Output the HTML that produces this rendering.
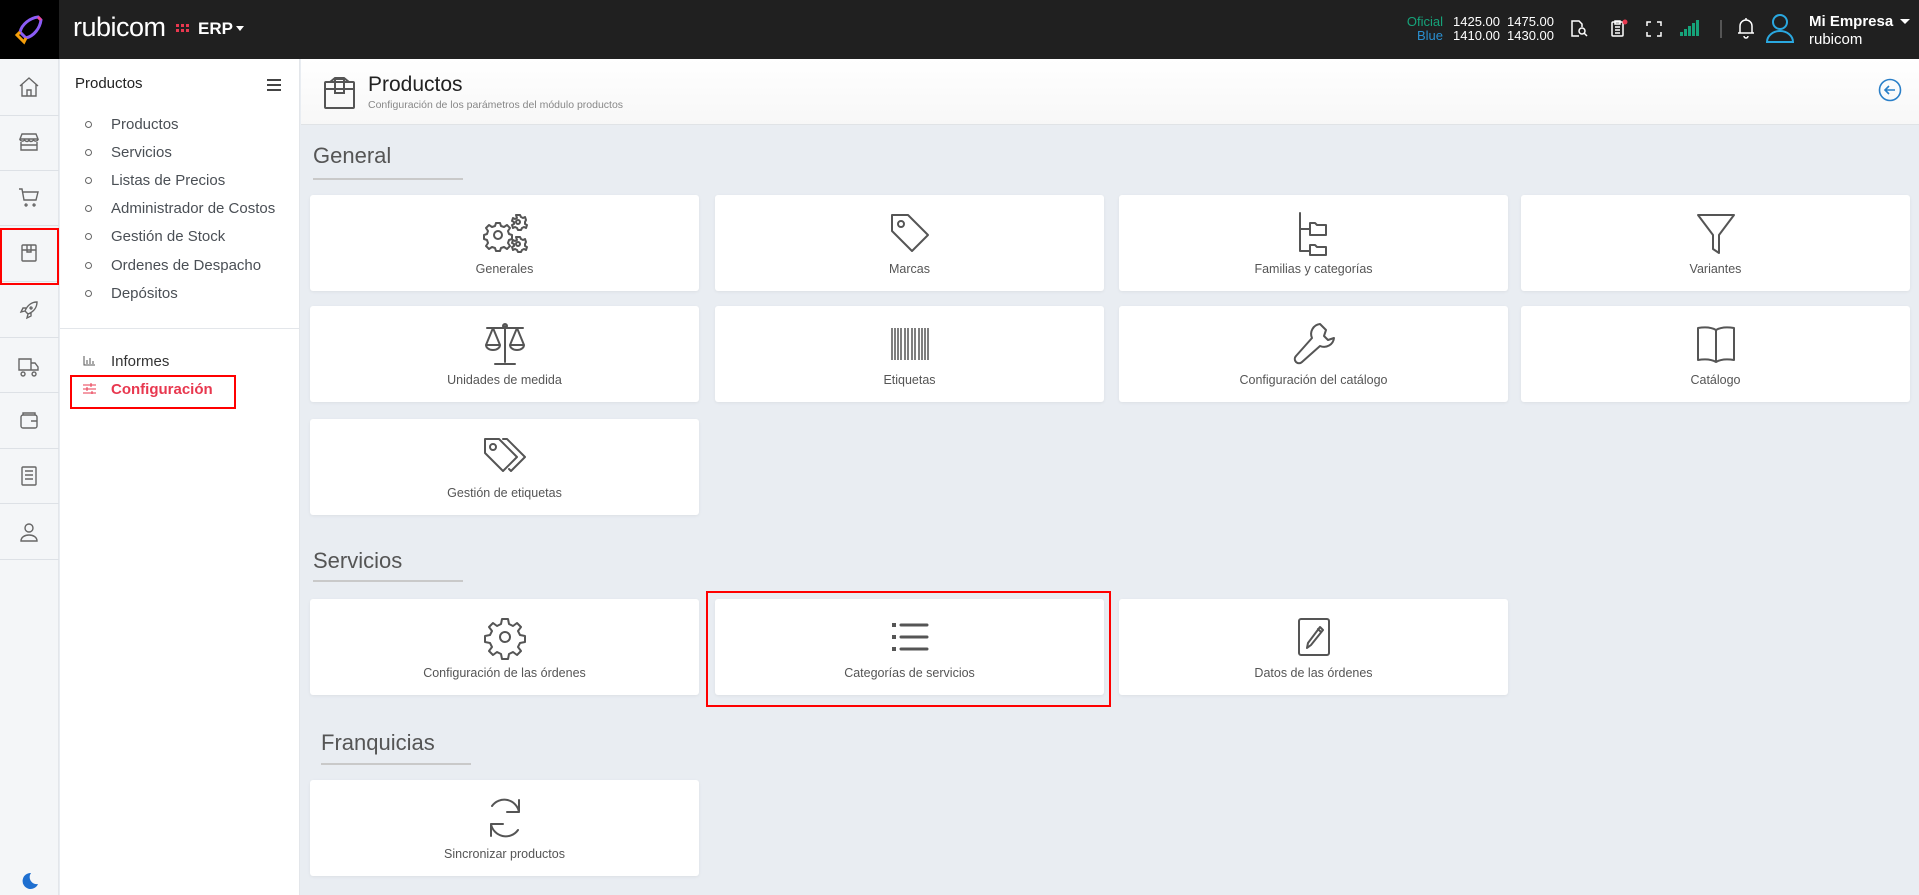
<!DOCTYPE html>
<html><head><meta charset="utf-8">
<style>
*{margin:0;padding:0;box-sizing:border-box}
body{width:1919px;height:895px;overflow:hidden;font-family:"Liberation Sans",sans-serif;background:#e9edf2;position:relative;color:#555}
.abs{position:absolute}
#top{left:0;top:0;width:1919px;height:59px;background:#202020}
#logo{left:0;top:0;width:59px;height:59px;background:#000}
#rail{left:0;top:59px;width:59px;height:836px;background:#f4f6f8;border-right:1px solid #e3e6ea}
.rsep{position:absolute;left:0;width:59px;height:1px;background:#dde1e6}
.ri{position:absolute;left:17px;width:24px;height:24px}
#side{left:60px;top:59px;width:240px;height:836px;background:#fff;border-right:1px solid #e3e6ea}
.li{position:absolute;left:51px;font-size:15px;color:#4a4f55}
.bul{position:absolute;left:25px;width:7px;height:7px;border:1px solid #666;border-radius:50%}
#chead{left:301px;top:59px;width:1618px;height:66px;background:linear-gradient(#fff,#f7f7f7);border-bottom:1px solid #e0e3e6}
.sec{position:absolute;font-size:22px;color:#555}
.ul{position:absolute;height:2px;background:#c9c9c9}
.card{position:absolute;width:389px;height:96px;background:#fff;border-radius:3px;box-shadow:0 1px 3px rgba(0,0,0,.06)}
.card svg{position:absolute;left:50%;top:14px;margin-left:-24px;width:48px;height:48px;fill:none;stroke:#555;stroke-width:2;stroke-linecap:round;stroke-linejoin:round}
.card span{position:absolute;left:0;right:0;top:67px;text-align:center;font-size:12.5px;color:#555}
.red{position:absolute;border:2px solid #f00}
.w{color:#fff}
</style></head><body>
<div id="top" class="abs"></div>
<div id="logo" class="abs"><svg width="59" height="59" viewBox="0 0 59 59"><path d="M38 17 C30 18 22 24 20 32 L26 38 C34 36 40 28 41 20 Z" fill="none" stroke="#8b5cf6" stroke-width="3"/><path d="M20 32 L17 35 L24 42 L26 38" fill="none" stroke="#f59e0b" stroke-width="3"/><path d="M38 17 L41 20" stroke="#ec4899" stroke-width="3"/></svg></div>
<div class="abs w" style="left:73px;top:12px;font-size:27px;font-weight:300;letter-spacing:-0.5px">rubicom</div>
<svg class="abs" style="left:176px;top:24px" width="13" height="9"><g fill="#e8384f"><rect x="0" y="0" width="3" height="3"/><rect x="5" y="0" width="3" height="3"/><rect x="10" y="0" width="3" height="3"/><rect x="0" y="5" width="3" height="3"/><rect x="5" y="5" width="3" height="3"/><rect x="10" y="5" width="3" height="3"/></g></svg>
<div class="abs w" style="left:198px;top:19px;font-size:17px;font-weight:bold">ERP</div>
<div class="abs" style="left:236px;top:26px;border:4px solid transparent;border-top:5px solid #fff"></div>

<div class="abs" style="left:1400px;top:15px;width:43px;text-align:right;font-size:13px;line-height:14px"><div style="color:#16a37a">Oficial</div><div style="color:#2a8fd0">Blue</div></div>
<div class="abs w" style="left:1453px;top:15px;font-size:13px;line-height:14px">1425.00<br>1410.00</div>
<div class="abs w" style="left:1507px;top:15px;font-size:13px;line-height:14px">1475.00<br>1430.00</div>
<svg class="abs" style="left:1569px;top:19px" width="22" height="20" fill="none" stroke="#fff" stroke-width="1.5"><path d="M10 17H3V2h7l3 3v3"/><circle cx="13" cy="12" r="3"/><path d="M15 14l3 3"/></svg>
<svg class="abs" style="left:1609px;top:18px" width="22" height="22" fill="none" stroke="#fff" stroke-width="1.5"><rect x="3" y="4" width="11" height="14" rx="1"/><path d="M6 3h5v3H6zM6 9h5M6 12h5M6 15h5"/><circle cx="16" cy="4" r="2.5" fill="#e8384f" stroke="none"/></svg>
<svg class="abs" style="left:1646px;top:21px" width="16" height="16" fill="none" stroke="#fff" stroke-width="1.5"><path d="M1 5V1h4M11 1h4v4M15 11v4h-4M5 15H1v-4"/></svg>
<svg class="abs" style="left:1680px;top:20px" width="20" height="16" fill="#16a37a"><rect x="0" y="12" width="3" height="4"/><rect x="4" y="9" width="3" height="7"/><rect x="8" y="6" width="3" height="10"/><rect x="12" y="3" width="3" height="13"/><rect x="16" y="0" width="3" height="16"/></svg>
<div class="abs" style="left:1720px;top:20px;width:2px;height:18px;background:#555"></div>
<svg class="abs" style="left:1737px;top:17px" width="18" height="22" fill="none" stroke="#fff" stroke-width="1.5"><path d="M3 16V9a6 6 0 0 1 12 0v7h2H1zM7 19a2 2 0 0 0 4 0M9 1v2"/></svg>
<svg class="abs" style="left:1765px;top:12px" width="30" height="32" fill="none" stroke="#2aa8e0" stroke-width="2"><circle cx="15" cy="10" r="7"/><path d="M2 30a13 11 0 0 1 26 0z"/></svg>
<div class="abs w" style="left:1809px;top:13px;font-size:15px;font-weight:bold">Mi Empresa</div>
<div class="abs" style="left:1900px;top:19px;border:5px solid transparent;border-top:5px solid #fff"></div>
<div class="abs w" style="left:1809px;top:31px;font-size:15px">rubicom</div>

<div id="rail" class="abs">
<div class="rsep" style="top:56px"></div><div class="rsep" style="top:111px"></div><div class="rsep" style="top:166px"></div><div class="rsep" style="top:222px"></div><div class="rsep" style="top:278px"></div><div class="rsep" style="top:333px"></div><div class="rsep" style="top:389px"></div><div class="rsep" style="top:444px"></div><div class="rsep" style="top:500px"></div>
<svg class="ri" style="top:16px" viewBox="0 0 24 24" fill="none" stroke="#666" stroke-width="1.4"><path d="M3 11l9-8 9 8M5 9v12h14V9M10 21v-6h4v6"/></svg>
<svg class="ri" style="top:71px" viewBox="0 0 24 24" fill="none" stroke="#666" stroke-width="1.4"><path d="M3 9l2-5h14l2 5zM3 9c0 2 3 3 4.5 1 1.5 2 3.5 2 4.5 0 1 2 3 2 4.5 0 1.5 2 4.5 1 4.5-1M4 12v8h16v-8M4 15h16"/></svg>
<svg class="ri" style="top:126px" viewBox="0 0 24 24" fill="none" stroke="#666" stroke-width="1.4"><path d="M2 4h3l2 11h12l2-8H6M9 19a1 1 0 1 0 .1 0M17 19a1 1 0 1 0 .1 0"/></svg>
<svg class="ri" style="top:182px" viewBox="0 0 24 24" fill="none" stroke="#666" stroke-width="1.4"><rect x="5" y="4" width="14" height="16" rx="1"/><path d="M5 9h14M10 4v7h4V4"/></svg>
<svg class="ri" style="top:239px" viewBox="0 0 24 24" fill="none" stroke="#666" stroke-width="1.4"><path d="M20 4c-6 0-10 4-12 9l3 3c5-2 9-6 9-12zM8 13l-4 1 2-4h3M11 16l-1 4 4-2v-3M14 9a1 1 0 1 0 .1 0"/></svg>
<svg class="ri" style="top:294px" viewBox="0 0 24 24" fill="none" stroke="#666" stroke-width="1.4"><path d="M2 6h12v11H2zM14 10h4l3 4v3h-7M6 19a2 2 0 1 0 .1 0M17 19a2 2 0 1 0 .1 0"/></svg>
<svg class="ri" style="top:349px" viewBox="0 0 24 24" fill="none" stroke="#666" stroke-width="1.4"><rect x="4" y="7" width="16" height="13" rx="2"/><path d="M6 7V5h12v2M14 13h6"/></svg>
<svg class="ri" style="top:405px" viewBox="0 0 24 24" fill="none" stroke="#666" stroke-width="1.4"><rect x="5" y="3" width="14" height="18" rx="1"/><path d="M8 7h8M8 11h8M8 15h8"/></svg>
<svg class="ri" style="top:461px" viewBox="0 0 24 24" fill="none" stroke="#666" stroke-width="1.4"><circle cx="12" cy="8" r="4"/><path d="M4 21c0-4 4-6 8-6s8 2 8 6z"/></svg>
<svg class="ri" style="top:810px" viewBox="0 0 24 24" fill="#1e6fd0"><path d="M14 4a8 8 0 1 0 7 11A7 7 0 0 1 14 4z"/></svg>
</div>
<div class="red" style="left:0;top:228px;width:59px;height:57px"></div>

<div id="side" class="abs">
<div class="abs" style="left:15px;top:16px;font-size:15px;color:#222">Productos</div>
<div class="abs" style="left:207px;top:20px;width:14px;height:2px;background:#444;box-shadow:0 5px 0 #444,0 10px 0 #444"></div>
<div class="bul" style="top:62px"></div><div class="li" style="top:57px">Productos</div>
<div class="bul" style="top:90px"></div><div class="li" style="top:85px">Servicios</div>
<div class="bul" style="top:118px"></div><div class="li" style="top:113px">Listas de Precios</div>
<div class="bul" style="top:146px"></div><div class="li" style="top:141px">Administrador de Costos</div>
<div class="bul" style="top:174px"></div><div class="li" style="top:169px">Gestión de Stock</div>
<div class="bul" style="top:203px"></div><div class="li" style="top:198px">Ordenes de Despacho</div>
<div class="bul" style="top:231px"></div><div class="li" style="top:226px">Depósitos</div>
<div class="abs" style="left:0;top:269px;width:240px;height:1px;background:#e3e6ea"></div>
<svg class="abs" style="left:23px;top:297px" width="12" height="10" fill="none" stroke="#555"><path d="M1 0v9h11M4 4v4M7 2v6M10 5v3"/></svg>
<div class="li" style="top:294px;color:#333">Informes</div>
<svg class="abs" style="left:23px;top:324px" width="13" height="11" fill="none" stroke="#e8384f"><path d="M0 2h13M0 6h13M0 10h13M8 0v4M4 4v4M9 8v3"/></svg>
<div class="li" style="top:322px;color:#e8384f;font-weight:bold">Configuración</div>
</div>
<div class="red" style="left:70px;top:375px;width:166px;height:34px"></div>

<div id="chead" class="abs">
<svg class="abs" style="left:23px;top:18px" width="32" height="33" fill="none" stroke="#555" stroke-width="2"><rect x="1" y="5" width="29" height="26" rx="1"/><path d="M1 12h29M11 2v14h9V2zM6 5l5-4h9l5 4"/></svg>
<div class="abs" style="left:67px;top:14px;font-size:21px;color:#222">Productos</div>
<div class="abs" style="left:67px;top:40px;font-size:10.5px;color:#888">Configuración de los parámetros del módulo productos</div>
<svg class="abs" style="left:1577px;top:19px" width="24" height="24" fill="none" stroke="#2a7fc8" stroke-width="1.6"><circle cx="12" cy="12" r="10.5"/><path d="M17 12H7M11 8l-4 4 4 4"/></svg>
</div>

<div class="sec" style="left:313px;top:143px">General</div><div class="ul" style="left:313px;top:178px;width:150px"></div>
<div class="sec" style="left:313px;top:548px">Servicios</div><div class="ul" style="left:313px;top:580px;width:150px"></div>
<div class="sec" style="left:321px;top:730px">Franquicias</div><div class="ul" style="left:321px;top:763px;width:150px"></div>

<div class="card" style="left:310px;top:195px"><svg viewBox="0 0 48 48"><circle cx="17" cy="26" r="4"/><path d="M15 14h4l1 3 3 1 3-2 3 3-2 3 1 3 3 1v4l-3 1-1 3 2 3-3 3-3-2-3 1-1 3h-4l-1-3-3-1-3 2-3-3 2-3-1-3-3-1v-4l3-1 1-3-2-3 3-3 3 2 3-1z"/><circle cx="37" cy="13" r="2"/><path d="M35 6h4l1 2 2 1 2-1 1 3-1 2v2l2 1-1 3-2-1-2 1-1 2h-3l-1-2-2-1-2 1-1-3 2-1v-2l-2-1 1-3 2 1 2-1z"/><circle cx="37" cy="35" r="2"/><path d="M35 28h4l1 2 2 1 2-1 1 3-1 2v2l2 1-1 3-2-1-2 1-1 2h-3l-1-2-2-1-2 1-1-3 2-1v-2l-2-1 1-3 2 1 2-1z"/></svg><span>Generales</span></div>
<div class="card" style="left:715px;top:195px"><svg viewBox="0 0 48 48"><path d="M6 6h16l20 20-16 16L6 22z"/><circle cx="15" cy="15" r="3"/></svg><span>Marcas</span></div>
<div class="card" style="left:1119px;top:195px"><svg viewBox="0 0 48 48"><path d="M10 4v38h10M10 20h10M20 14h5l2 2h9v10H20zM20 36h5l2 2h9v8H20z"/></svg><span>Familias y categorías</span></div>
<div class="card" style="left:1521px;top:195px"><svg viewBox="0 0 48 48"><path d="M6 6h36L27 26v18l-6-4V26z"/></svg><span>Variantes</span></div>

<div class="card" style="left:310px;top:306px"><svg viewBox="0 0 48 48"><path d="M6 8h36M24 6v36M14 44h20M12 8l-7 17h14zM36 8l-7 17h14zM5 25a7 5 0 0 0 14 0M29 25a7 5 0 0 0 14 0"/><circle cx="24" cy="6" r="2"/></svg><span>Unidades de medida</span></div>
<div class="card" style="left:715px;top:306px"><svg viewBox="0 0 48 48" style="stroke-linecap:butt"><path d="M6 8v32M9 8v32M12 8v32M15 8v32M19 8v32M22 8v32M26 8v32M29 8v32M33 8v32M36 8v32M39 8v32M42 8v32" stroke-width="1.5"/></svg><span>Etiquetas</span></div>
<div class="card" style="left:1119px;top:306px"><svg viewBox="0 0 48 48"><path d="M30 4a10 10 0 0 0-8 14L6 36a3 3 0 0 0 6 6l18-16a10 10 0 0 0 14-8l-6 2-4-4 2-6z"/></svg><span>Configuración del catálogo</span></div>
<div class="card" style="left:1521px;top:306px"><svg viewBox="0 0 48 48"><path d="M24 10c-5-3-12-3-18-2v32c6-1 13-1 18 2 5-3 12-3 18-2V8c-6-1-13-1-18 2zM24 10v32"/></svg><span>Catálogo</span></div>

<div class="card" style="left:310px;top:419px"><svg viewBox="0 0 48 48"><path d="M4 6h14l18 18-14 14L4 20zM22 6h4l18 18-14 14-2-2"/><circle cx="12" cy="14" r="3"/></svg><span>Gestión de etiquetas</span></div>

<div class="card" style="left:310px;top:599px"><svg viewBox="0 0 48 48"><circle cx="24" cy="24" r="5"/><path d="M21 6h6l1 5 4 2 4-3 4 4-3 4 2 4 5 1v6l-5 1-2 4 3 4-4 4-4-3-4 2-1 5h-6l-1-5-4-2-4 3-4-4 3-4-2-4-5-1v-6l5-1 2-4-3-4 4-4 4 3 4-2z"/></svg><span>Configuración de las órdenes</span></div>
<div class="card" style="left:715px;top:599px"><svg viewBox="0 0 48 48"><path d="M8 10v4M8 22v4M8 34v4" stroke-width="4" stroke-linecap="butt"/><path d="M15 12h26M15 24h26M15 36h26" stroke-width="3"/></svg><span>Categorías de servicios</span></div>
<div class="card" style="left:1119px;top:599px"><svg viewBox="0 0 48 48"><rect x="9" y="6" width="30" height="36" rx="2"/><path d="M30 14l-12 16-1 5 4-3 12-15zM28 16l3 3"/></svg><span>Datos de las órdenes</span></div>
<div class="red" style="left:706px;top:591px;width:405px;height:116px"></div>

<div class="card" style="left:310px;top:780px"><svg viewBox="0 0 48 48"><path d="M38 18a15 15 0 0 0-27-6M10 30a15 15 0 0 0 27 6M38 6v12H26M10 42V30h12"/></svg><span>Sincronizar productos</span></div>
</body></html>
